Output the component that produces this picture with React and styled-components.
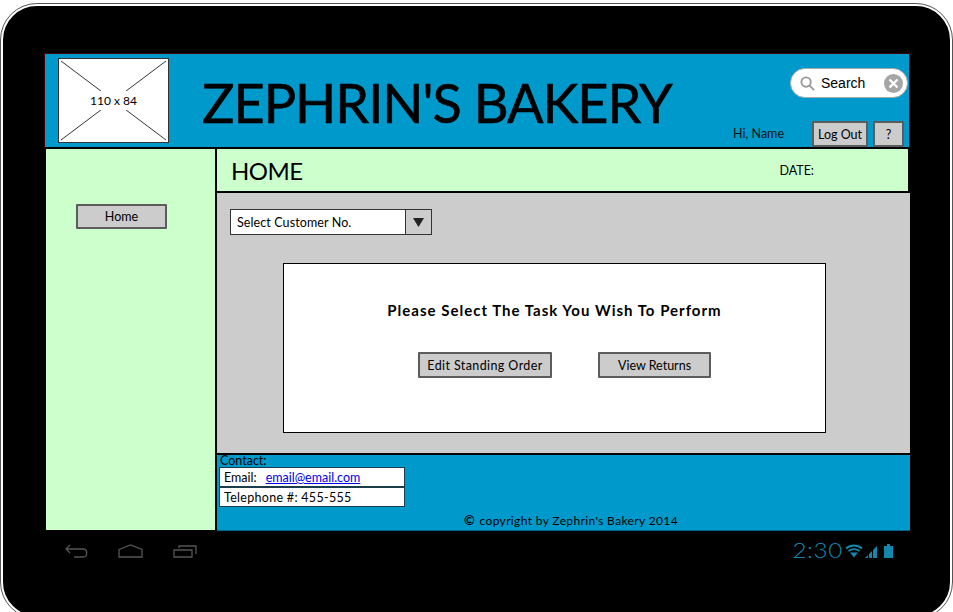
import React from 'react';
import styled, { createGlobalStyle } from 'styled-components';

const GlobalStyle = createGlobalStyle`
  html, body {
    margin: 0;
    padding: 0;
    background: #fff;
  }
`;

const comic = `Lato, "Noto Sans", sans-serif`;

// 화면 영역
const Page = styled.div`
  width: 953px;
  height: 612px;
  padding-top: 3px;
  box-sizing: border-box;
  overflow: hidden;
`;

// 기기 프레임
const Device = styled.div`
  box-sizing: border-box;
  width: 953px;
  height: 616px;
  padding: 47px 41px 0 41px;
  background: #000;
  border: 3px solid #fff;
  outline: 1px solid #555;
  outline-offset: -1px;
  border-radius: 37px;
`;

const Screen = styled.div`
  width: 866px;
  height: 478px;
  display: grid;
  grid-template-columns: 173px 1fr;
  grid-template-rows: 96px 1fr;
  font-family: ${comic};
  color: #000;
`;

const Header = styled.header`
  grid-column: 1 / 3;
  box-sizing: border-box;
  display: flex;
  padding: 4px 1px 0 13px;
  background: #0099cc;
  border-top: 1px solid #400;
  border-left: 1px solid #400;
  border-right: 1px solid #400;
  border-bottom: 2px solid #000;
`;

const LogoBox = styled.div`
  position: relative;
  box-sizing: border-box;
  width: 111px;
  height: 85px;
  background: #fff;
  border: 1px solid #333;
  flex: none;
  display: flex;
  align-items: center;
  justify-content: center;
  font-size: 12px;
`;

const LogoLines = styled.svg`
  position: absolute;
  inset: 0;
  width: 100%;
  height: 100%;
`;

const LogoLabel = styled.span`
  position: relative;
  padding: 2px;
  background: #fff;
`;

const Title = styled.h1`
  margin: 14px 0 0 33px;
  font-size: 54px;
  line-height: 62px;
  font-weight: 400;
  letter-spacing: -1px;
  -webkit-text-stroke: 0.6px #000;
  white-space: nowrap;
`;

const HeaderRight = styled.div`
  margin-left: auto;
  display: flex;
  flex-direction: column;
  align-items: flex-end;
  justify-content: space-between;
`;

const SearchPill = styled.div`
  box-sizing: border-box;
  margin-top: 10px;
  width: 118px;
  height: 30px;
  padding: 0 4px 0 9px;
  display: flex;
  align-items: center;
  gap: 6px;
  background: #fff;
  border: 1px solid #aaa;
  border-radius: 15px;
  font: 14px "Liberation Sans", Arial, sans-serif;
`;

const ClearDot = styled.span`
  margin-left: auto;
  width: 19px;
  height: 19px;
  display: flex;
  align-items: center;
  justify-content: center;
  border-radius: 50%;
  background: #a6a6a6;
`;

const UserRow = styled.div`
  display: flex;
  align-items: flex-end;
  padding-right: 4px;
`;

const Greeting = styled.span`
  margin: 0 28px 6px 0;
  font-size: 12.5px;
  color: #111;
`;

const Button = styled.button`
  box-sizing: border-box;
  height: ${p => p.$h || 26}px;
  width: ${p => p.$w}px;
  margin: ${p => p.$m || 0};
  padding: 0;
  background: #ccc;
  border: 2px solid #5c5c5c;
  border-radius: 1px;
  color: #000;
  font-family: ${comic};
  font-size: 12.5px;
  letter-spacing: ${p => p.$ls || 0}px;
  white-space: nowrap;
`;

const Sidebar = styled.aside`
  box-sizing: border-box;
  padding: 55px 0 0 30px;
  background: #ccffcc;
  border-left: 2px solid #000;
  border-right: 2px solid #000;
  margin-bottom: 1px;
`;

const Main = styled.main`
  display: flex;
  flex-direction: column;
  min-width: 0;
`;

const PageBar = styled.div`
  box-sizing: border-box;
  height: 44px;
  padding: 0 0 0 14px;
  display: flex;
  align-items: center;
  background: #ccffcc;
  border-right: 2px solid #000;
  border-bottom: 2px solid #000;
`;

const PageTitle = styled.h2`
  margin: 0;
  font-size: 24px;
  font-weight: 400;
  letter-spacing: -0.5px;
`;

const DateLabel = styled.span`
  margin-left: auto;
  margin-right: 94px;
  font-size: 12.5px;
`;

const Content = styled.div`
  box-sizing: border-box;
  height: 262px;
  padding: 16px 0 0 13px;
  background: #ccc;
  border-bottom: 2px solid #000;
`;

const SelectBox = styled.div`
  box-sizing: border-box;
  width: 202px;
  height: 26px;
  display: flex;
  background: #fff;
  border: 1px solid #333;
  font-size: 12.5px;
  letter-spacing: 0.1px;
`;

const SelectText = styled.span`
  flex: 1;
  padding-left: 6px;
  line-height: 26px;
`;

const SelectArrow = styled.span`
  width: 25px;
  display: flex;
  align-items: center;
  justify-content: center;
  background: #ccc;
  border-left: 1px solid #333;
`;

const TaskCard = styled.section`
  box-sizing: border-box;
  width: 543px;
  height: 170px;
  margin: 28px 0 0 53px;
  padding-top: 37px;
  background: #fff;
  border: 1px solid #000;
`;

const TaskHeading = styled.h3`
  margin: 0;
  text-align: center;
  font-size: 15px;
  line-height: 18px;
  font-weight: 700;
  letter-spacing: 1px;
`;

const TaskButtons = styled.div`
  margin: 33px 0 0 134px;
  display: flex;
  gap: 46px;
`;

const Footer = styled.footer`
  flex: 1;
  box-sizing: border-box;
  padding: 0 0 0 2px;
  background: #0099cc;
  border-bottom: 1px solid #00668c;
`;

const ContactLabel = styled.div`
  padding-left: 1px;
  font-size: 12.5px;
  line-height: 12px;
`;

const ContactRow = styled.div`
  box-sizing: border-box;
  width: 186px;
  height: 20px;
  padding-left: 4px;
  display: flex;
  align-items: center;
  gap: ${p => p.$gap || 0}px;
  background: #fff;
  border: 1px solid #1c3d4a;
  font-size: 12.5px;
  letter-spacing: ${p => p.$ls || 0}px;
`;

const MailLink = styled.a`
  color: #0000ee;
  text-decoration: underline;
`;

const Copyright = styled.div`
  margin: 6px 0 0 245px;
  font-size: 12px;
  line-height: 14px;
  letter-spacing: 0.36px;
  white-space: nowrap;
`;

const CopyMark = styled.span`
  margin-right: 1px;
  font-size: 13px;
  font-weight: 700;
`;

// 하단 안드로이드 바
const NavBar = styled.div`
  display: flex;
  align-items: center;
  height: 40px;
  padding: 0 0 0 21px;
`;

const NavIcons = styled.div`
  display: flex;
  align-items: center;
  gap: 30px;
`;

const Status = styled.div`
  margin-left: auto;
  margin-right: 16px;
  display: flex;
  align-items: center;
  gap: 2px;
  color: #1487ad;
`;

const Clock = styled.span`
  margin-top: -3px;
  font: 300 21px Lato, sans-serif;
  line-height: 21px;
  letter-spacing: 0.6px;
  transform: scaleX(1.15);
  transform-origin: right center;
`;

const Battery = styled.svg`
  margin-left: 4px;
`;

function App() {
  return (
    <Page>
      <GlobalStyle />
      <Device>
        <Screen>
          <Header>
            <LogoBox>
              <LogoLines viewBox="0 0 110 84" preserveAspectRatio="none">
                <path d="M2 2L108 82M108 2L2 82" stroke="#333" strokeWidth="1" fill="none" />
              </LogoLines>
              <LogoLabel>110 x 84</LogoLabel>
            </LogoBox>
            <Title>ZEPHRIN'S BAKERY</Title>
            <HeaderRight>
              <SearchPill>
                <svg width="15" height="15" viewBox="0 0 16 16" fill="none" stroke="#999" strokeWidth="2">
                  <circle cx="6.5" cy="6.5" r="5" />
                  <path d="M10 10l5 5" />
                </svg>
                Search
                <ClearDot>
                  <svg width="11" height="11" viewBox="0 0 11 11" stroke="#fff" strokeWidth="2.4">
                    <path d="M1.5 1.5l8 8M9.5 1.5l-8 8" />
                  </svg>
                </ClearDot>
              </SearchPill>
              <UserRow>
                <Greeting>Hi, Name</Greeting>
                <Button $w={56} $m="0 5px 0 0">Log Out</Button>
                <Button $w={31}>?</Button>
              </UserRow>
            </HeaderRight>
          </Header>
          <Sidebar>
            <Button $w={91} $h={25}>Home</Button>
          </Sidebar>
          <Main>
            <PageBar>
              <PageTitle>HOME</PageTitle>
              <DateLabel>DATE:</DateLabel>
            </PageBar>
            <Content>
              <SelectBox>
                <SelectText>Select Customer No.</SelectText>
                <SelectArrow>
                  <svg width="11" height="9" viewBox="0 0 11 9"><path d="M0 0h11L5.5 9z" fill="#222" /></svg>
                </SelectArrow>
              </SelectBox>
              <TaskCard>
                <TaskHeading>Please Select The Task You Wish To Perform</TaskHeading>
                <TaskButtons>
                  <Button $w={134} $ls={0.4}>Edit Standing Order</Button>
                  <Button $w={113}>View Returns</Button>
                </TaskButtons>
              </TaskCard>
            </Content>
            <Footer>
              <ContactLabel>Contact:</ContactLabel>
              <ContactRow $gap={9}>Email: <MailLink href="#">email@email.com</MailLink></ContactRow>
              <ContactRow $ls={0.3}>Telephone #: 455-555</ContactRow>
              <Copyright><CopyMark>©</CopyMark> copyright by Zephrin's Bakery 2014</Copyright>
            </Footer>
          </Main>
        </Screen>
        <NavBar>
          <NavIcons>
            <svg width="23" height="14" viewBox="0 0 23 14" fill="none" stroke="#555" strokeWidth="1.3">
              <path d="M1 5h17c5 0 5 8 0 8H9M5 1L1 5l4 4" />
            </svg>
            <svg width="25" height="14" viewBox="0 0 25 14" fill="none" stroke="#555" strokeWidth="1.3">
              <path d="M1 5.5L12.5 1 24 5.5V13H1z" />
            </svg>
            <svg width="24" height="13" viewBox="0 0 24 13" fill="none" stroke="#555" strokeWidth="1.3">
              <path d="M1 5h18v7H1zM6 3V1h17v8" />
            </svg>
          </NavIcons>
          <Status>
            <Clock>2:30</Clock>
            <svg width="18" height="14" viewBox="0 0 18 14" fill="none" stroke="#1487ad" strokeWidth="1.8">
              <path d="M1 4.5c4.5-4 11.5-4 16 0M3.5 7c3-2.500 8-2.500 11 0" />
              <path d="M5 8.5h8L9 13.5z" fill="#1487ad" stroke="none" />
            </svg>
            <svg width="13" height="14" viewBox="0 0 13 14" fill="#1487ad">
              <path d="M0 14l3-3v3zM4 10l3-3v7H4zM8 6l4-4v12H8z" />
            </svg>
            <Battery width="9" height="14" viewBox="0 0 9 14" fill="#1487ad">
              <path d="M3 0h3v2h3v12H0V2h3z" />
            </Battery>
          </Status>
        </NavBar>
      </Device>
    </Page>
  );
}

export default App;
